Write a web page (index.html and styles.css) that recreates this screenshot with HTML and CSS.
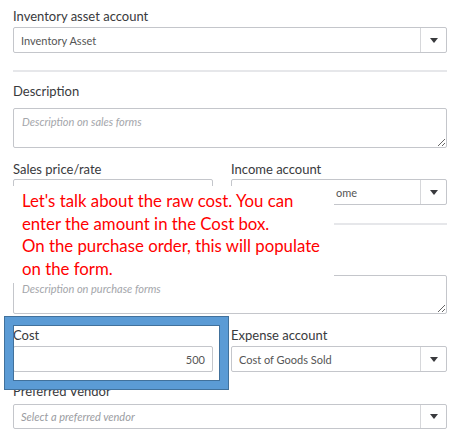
FILE: index.html
```html
<!DOCTYPE html>
<html>
<head>
<meta charset="utf-8">
<link rel="stylesheet" href="styles.css">
</head>
<body>
<div class="form">
  <div class="field full first">
    <div class="label">Inventory asset account</div>
    <div class="select"><span class="value">Inventory Asset</span><span class="btn"><span class="tri"></span></span></div>
  </div>
  <div class="sep sep1"></div>
  <div class="field full desc">
    <div class="label">Description</div>
    <textarea class="area" placeholder="Description on sales forms"></textarea>
  </div>
  <div class="row row1">
    <div class="field">
      <div class="label">Sales price/rate</div>
      <div class="input"></div>
    </div>
    <div class="field">
      <div class="label">Income account</div>
      <div class="select"><span class="value clipped">ome</span><span class="btn"><span class="tri"></span></span></div>
    </div>
  </div>
  <div class="sep sep2"></div>
  <div class="field full pdesc">
    <div class="label"></div>
    <textarea class="area" placeholder="Description on purchase forms"></textarea>
  </div>
  <div class="row row2">
    <div class="field">
      <div class="label">Cost</div>
      <div class="input right"><span class="value">500</span></div>
    </div>
    <div class="field">
      <div class="label">Expense account</div>
      <div class="select"><span class="value">Cost of Goods Sold</span><span class="btn"><span class="tri"></span></span></div>
    </div>
  </div>
  <div class="field full vendor">
    <div class="label">Preferred Vendor</div>
    <div class="select"><span class="value ph">Select a preferred vendor</span><span class="btn"><span class="tri"></span></span></div>
  </div>

  <div class="note">Let's talk about the raw cost. You can<br>enter the amount in the Cost box.<br>On the purchase order, this will populate<br>on the form.</div>
  <div class="highlight"></div>
</div>
</body>
</html>
```
FILE: styles.css
```css
html, body {
  margin: 0;
  padding: 0;
  background: #ffffff;
}
body {
  width: 449px;
  height: 433px;
  overflow: hidden;
  font-family: Lato, "Open Sans", sans-serif;
  color: #393a3d;
}
.form {
  position: relative;
  padding: 8px 0 0 13px;
  width: 434px;
}
.label {
  font-size: 13px;
  line-height: 16px;
  height: 16px;
  color: #393a3d;
  margin-bottom: 3px;
  white-space: nowrap;
}
.select, .input {
  box-sizing: border-box;
  height: 26px;
  border: 1px solid #c4c6cb;
  border-radius: 2px;
  display: flex;
  align-items: center;
  font-size: 11px;
  color: #555;
  background: #fff;
}
.select .value, .input .value {
  flex: 1;
  padding-left: 7px;
  white-space: nowrap;
  overflow: hidden;
}
.select .value.clipped {
  padding-left: 104px;
}
.input.right .value {
  text-align: right;
  padding-right: 7px;
}
.value.ph {
  font-style: italic;
  color: #9a9ca1;
}
.btn {
  width: 25px;
  height: 100%;
  border-left: 1px solid #d6d7da;
  display: flex;
  align-items: center;
  justify-content: center;
}
.tri {
  width: 0;
  height: 0;
  border-left: 4px solid transparent;
  border-right: 4px solid transparent;
  border-top: 5px solid #393a3d;
}
.sep {
  height: 2px;
  background: #e6e7ea;
}
.sep1 { margin-top: 17px; }
.desc { margin-top: 11px; }
.desc .label { margin-bottom: 9px; }
.area {
  display: block;
  box-sizing: border-box;
  width: 434px;
  height: 40px;
  border: 1px solid #c4c6cb;
  border-radius: 2px;
  padding: 6px 8px;
  margin: 0;
  font-family: Lato, "Open Sans", sans-serif;
  font-size: 11px;
  resize: vertical;
  outline: none;
}
.area::placeholder {
  font-style: italic;
  color: #a4a6ab;
}
.row {
  display: grid;
  grid-template-columns: 200px 216px;
  column-gap: 18px;
}
.row1 { margin-top: 13px; }
.row1 .label { margin-bottom: 2px; }
.sep2 { margin-top: 18px; }
.pdesc { margin-top: 20px; }
.pdesc .label { margin-bottom: 14px; }
.pdesc .area { height: 39px; }
.row2 { margin-top: 13px; }
.vendor { margin-top: 11px; }
.vendor .label { margin-bottom: 5px; }
.vendor .select { height: 25px; }

.note {
  position: absolute;
  left: 0;
  top: 186px;
  width: 334px;
  height: 97px;
  background: #ffffff;
  box-sizing: border-box;
  padding: 4px 0 0 22px;
  font-family: Lato, "Open Sans", sans-serif;
  font-size: 16.8px;
  line-height: 22.5px;
  color: #ff0000;
  white-space: nowrap;
}
.highlight {
  position: absolute;
  left: 5px;
  top: 317px;
  width: 223px;
  height: 72px;
  box-sizing: border-box;
  border: 8px solid #5b9bd5;
  box-shadow: 0 0 0 1px #41719c, inset 0 0 0 1px #41719c;
}
```
